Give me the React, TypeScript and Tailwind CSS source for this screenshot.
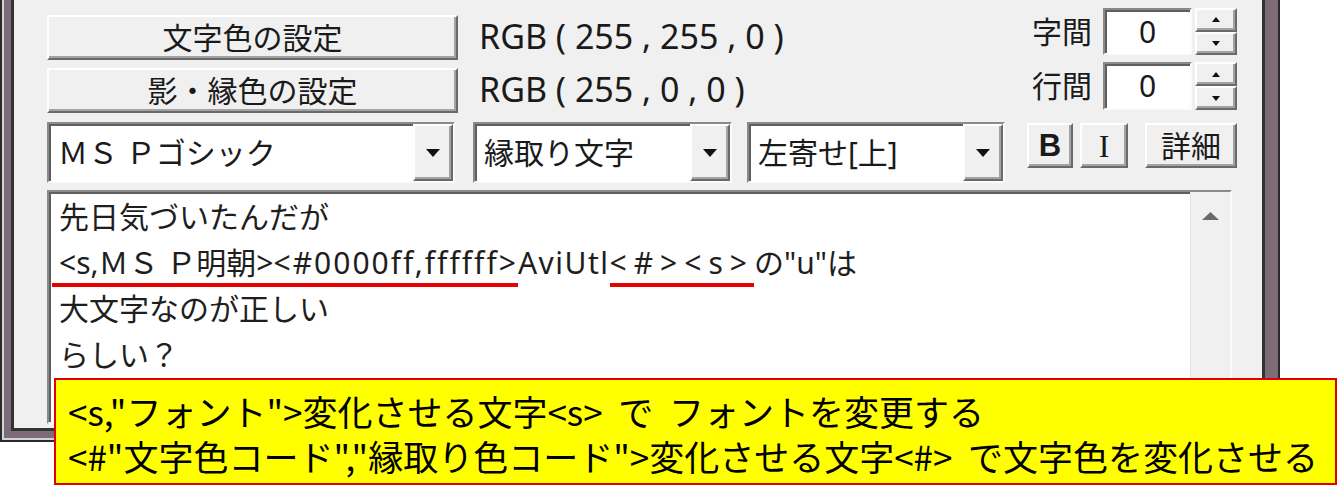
import React from 'react';

const raised =
  'border-2 border-t-white border-l-white border-r-[#6a6a6a] border-b-[#6a6a6a] bg-[#f0f0f0] shadow-[inset_-2px_-2px_0_#a3a3a3]';
const sunken =
  'border-2 border-t-[#8a8a8a] border-l-[#8a8a8a] border-r-[#fbfbfb] border-b-[#fbfbfb] bg-white shadow-[inset_2px_2px_0_#5f5f5f]';

const Tri: React.FC<{ up?: boolean; w: number; h: number; color?: string }> = ({ up, w, h, color = '#111' }) => (
  <svg width={w} height={h} viewBox={`0 0 ${w} ${h}`}>
    <polygon points={up ? `0,${h} ${w / 2},0 ${w},${h}` : `0,0 ${w},0 ${w / 2},${h}`} fill={color} />
  </svg>
);

const ColorRow: React.FC<{ label: string; value: string }> = ({ label, value }) => (
  <div className="flex h-[45px] items-center">
    <button className={`${raised} flex h-full w-[411px] items-center justify-center text-[30px] leading-none text-[#1a1a1a]`}>
      {label}
    </button>
    <span className="ml-[21px] -mt-[4px] font-['Noto_Sans',sans-serif] text-[34px] leading-none text-[#1a1a1a]">{value}</span>
  </div>
);

const SpinField: React.FC<{ label: string; h: string }> = ({ label, h }) => (
  <div className={`flex items-center ${h}`}>
    <span className="mr-[11px] text-[30px] leading-none text-[#1a1a1a]">{label}</span>
    <div className={`${sunken} flex h-full w-[89px] items-center justify-center font-['Noto_Sans',sans-serif] text-[30px] leading-none text-[#1a1a1a]`}>
      0
    </div>
    <div className="ml-[3px] flex h-full w-[42px] flex-col">
      <div className={`${raised} flex flex-1 items-center justify-center`}>
        <Tri up w={8} h={5} />
      </div>
      <div className={`${raised} flex flex-1 items-center justify-center`}>
        <Tri w={8} h={5} />
      </div>
    </div>
  </div>
);

const Combo: React.FC<{ text: string; w: string }> = ({ text, w }) => (
  <div className={`${sunken} flex h-[61px] ${w}`}>
    <div className="flex flex-1 items-center pl-[9px] text-[30px] leading-none text-[#1a1a1a]">{text}</div>
    <div className={`${raised} flex w-[40px] items-center justify-center`}>
      <Tri w={14} h={8} />
    </div>
  </div>
);

export default function App() {
  return (
    <div className="relative h-[501px] w-[1339px] overflow-hidden bg-white font-['Noto_Sans','Noto_Sans_CJK_JP',sans-serif]">
      {/* window frame */}
      <div className="w-[1280px] border-x-2 border-b-2 border-[#2a2a2a]">
        <div className="border-b-2 border-l-2 border-[#d4d4d4]">
          <div className="border-b-[7px] border-l-[7px] border-r-[13px] border-[#7e6b78]">
            <div className="border-x-[3px] border-b-[3px] border-[#333]">
              <div className="h-[428px] bg-[#f0f0f0] pl-[33px] pr-[25px]">
                <div className="flex items-start">
                  <div className="flex flex-col gap-[8px] pt-[15px]">
                    <ColorRow label="文字色の設定" value="RGB ( 255 , 255 , 0 )" />
                    <ColorRow label="影・縁色の設定" value="RGB ( 255 , 0 , 0 )" />
                  </div>
                  <div className="ml-auto flex flex-col items-end gap-[7px] pt-[8px]">
                    <SpinField label="字間" h="h-[47px]" />
                    <SpinField label="行間" h="h-[48px]" />
                  </div>
                </div>

                <div className="mt-[9px] flex items-start">
                  <Combo text="ＭＳ Ｐゴシック" w="w-[408px]" />
                  <div className="ml-[18px]">
                    <Combo text="縁取り文字" w="w-[259px]" />
                  </div>
                  <div className="ml-[15px]">
                    <Combo text="左寄せ[上]" w="w-[258px]" />
                  </div>
                  <button className={`${raised} ml-[22px] mt-[1px] flex h-[45px] w-[46px] items-center justify-center font-['Liberation_Sans',sans-serif] text-[31px] font-semibold leading-none text-[#1a1a1a]`}>
                    B
                  </button>
                  <button className={`${raised} ml-[7px] mt-[1px] flex h-[45px] w-[48px] items-center justify-center font-['Liberation_Serif',serif] text-[32px] leading-none text-[#1a1a1a]`}>
                    I
                  </button>
                  <button className={`${raised} ml-[17px] mt-[1px] flex h-[45px] w-[92px] items-center justify-center text-[30px] leading-none text-[#1a1a1a]`}>
                    詳細
                  </button>
                </div>

                <div className={`${sunken} mr-[5px] mt-[7px] flex h-[234px]`}>
                  <div className="flex-1 pl-[10px] pt-[2px] text-[30px] leading-[46px] text-[#1e1e1e]">
                    <div>先日気づいたんだが</div>
                    <div className="whitespace-nowrap">
                      <span className="-ml-[7px] border-b-4 border-[#e60000] pl-[7px]">
                        {'<s,ＭＳ Ｐ明朝>'}
                        <span className="tracking-[2px]">{'<#0000ff,ffffff>'}</span>
                      </span>
                      <span className="tracking-[1.5px]">AviUtl</span>
                      <span className="border-b-4 border-[#e60000] tracking-[7px]">{'<#><s>'}</span>
                      {'の"u"は'}
                    </div>
                    <div>大文字なのが正しい</div>
                    <div>らしい？</div>
                  </div>
                  <div className="flex w-[40px] justify-center border-l border-[#e4e4e4] bg-[#f0f0f0] pt-[20px]">
                    <Tri up w={17} h={8} color="#6a6a6a" />
                  </div>
                </div>
              </div>
            </div>
          </div>
        </div>
      </div>

      {/* annotation */}
      <div className="absolute left-[54px] top-[378px] h-[107px] w-[1283px] border-2 border-[#e00000] bg-[#ffff00] pl-[12px] pt-[8px] font-['Noto_Sans_CJK_JP',sans-serif] text-[35px] leading-[45px] text-black">
        <div className="whitespace-pre">{'<s,"フォント">変化させる文字<s>  で  フォントを変更する'}</div>
        <div className="whitespace-pre">{'<#"文字色コード","縁取り色コード">変化させる文字<#>  で文字色を変化させる'}</div>
      </div>
    </div>
  );
}
